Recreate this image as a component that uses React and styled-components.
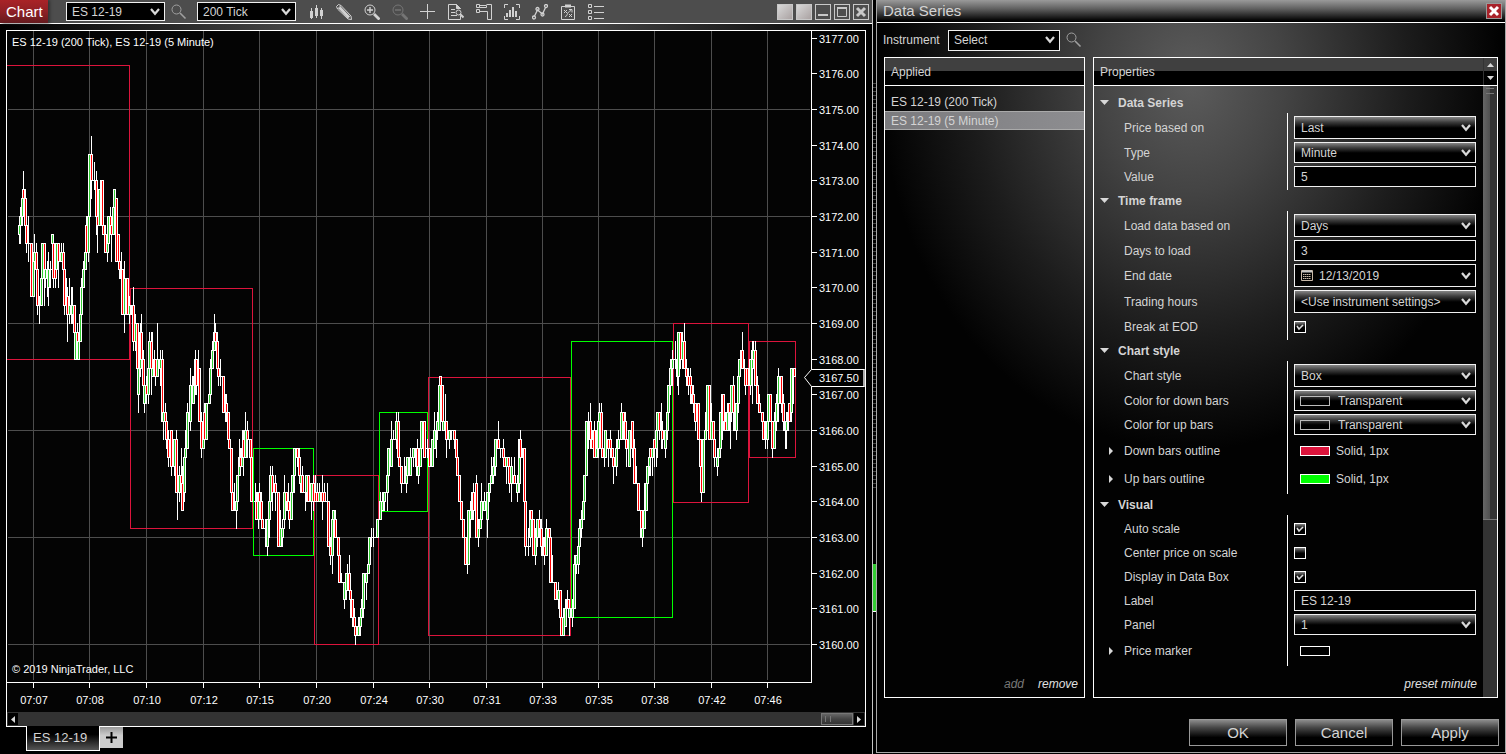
import React, { useState } from 'react';
import styled, { createGlobalStyle, css } from 'styled-components';

const GlobalStyle = createGlobalStyle`
    * { box-sizing: border-box; }
    body {
        margin: 0;
        background: #000;
        color: #d4d4d4;
        font: 12px/16px "Liberation Sans", Arial, sans-serif;
    }
    button, input, select { font: inherit; color: inherit; margin: 0; border-radius: 0; }
`;

const glossy = css`background: linear-gradient(#858585, #3c3c3c 25%, #000 52%);`;

const Desktop = styled.main`
    display: grid;
    grid-template-columns: minmax(0, 1fr) 3px 630px;
    min-height: 100vh;
`;

/* ---------- chart window ---------- */

const ChartWindow = styled.section`
    display: flex;
    flex-direction: column;
    border-right: 1px solid #c4c4c4;
    background: radial-gradient(ellipse 50% 400px at 50% 0, #505050, #444 35%, #000);
`;

const Toolbar = styled.header`
    display: flex;
    align-items: center;
    height: 24px;
    padding-right: 3px;
    background: #4d4d4d;
    border-bottom: 1px solid #fff;
`;

const ChartTitle = styled.h1`
    margin: 0 18px 0 0;
    width: 48px;
    padding-left: 6px;
    font-size: 15px;
    font-weight: normal;
    line-height: 23px;
    color: #fff;
    background: linear-gradient(#a92327, #8f2025 50%, #651a1e);
    box-shadow: 2px 0 3px #333;
`;

const Tools = styled.div`
    display: flex;
    flex: 1;
    gap: 12px;
    margin-left: 12px;
`;

const IconButton = styled.button`
    display: block;
    padding: 0;
    width: 16px;
    height: 16px;
    border: 0;
    background: none;
    color: #d2d2d2;
    opacity: ${p => (p.disabled ? 0.3 : 1)};
    svg { display: block; }
`;

const SearchButton = styled(IconButton)`
    margin: 0 10px 0 6px;
    color: #a0a0a0;
`;

const WindowButtons = styled.div`
    display: flex;
    gap: 3px;
`;

const WindowButton = styled.button`
    display: block;
    padding: 0;
    width: 16px;
    height: 16px;
    border: 1px solid #c8c8c8;
    color: #c8c8c8;
    background: ${p => (p.$solid ? 'linear-gradient(135deg, #d8d8d8, #aaa2a2)' : 'none')};
    svg { display: block; }
`;

const ChartFrame = styled.div`
    margin: 6px 6px 0;
    border: 1px solid #fff;
    background: #040404;
`;

const ChartSvg = styled.svg`
    display: block;
    width: 100%;
    height: auto;
    text { font-size: 11px; fill: #fff; }
`;

const TimeScroll = styled.div`
    display: flex;
    height: 14px;
    padding: 1px;
    background: #333;
`;

const ScrollArrow = styled.button`
    display: block;
    width: 10px;
    padding: 0;
    border: 0;
    background: #000;
    svg { display: block; margin: auto; }
`;

const ScrollThumb = styled.div`
    width: 32px;
    margin: 0 1px 0 auto;
    padding: 2px 3px;
    border: 1px solid #777;
    background: linear-gradient(#666, #444 50%, #333);
    &::before {
        content: '';
        display: block;
        width: 4px;
        height: 6px;
        border: solid #777;
        border-width: 0 1px;
    }
`;

const Tabs = styled.nav`
    display: flex;
    align-items: flex-start;
    padding-left: 26px;
`;

const Tab = styled.button`
    width: 74px;
    height: 25px;
    margin-top: -1px;
    padding: 0 6px;
    border: 1px solid #fff;
    border-top: 0;
    font-size: 13px;
    text-align: left;
    color: #d4d4d4;
    background: linear-gradient(#000 35%, #555);
`;

const AddTab = styled.button`
    display: block;
    width: 23px;
    height: 21px;
    padding: 0 0 0 6px;
    border: 0;
    background: linear-gradient(#999, #ccc 40%);
    svg { display: block; }
`;

/* slice of the window that lies behind the two others */
const Backdrop = styled.div`
    display: flex;
    flex-direction: column;
    padding-top: 80px;
`;

const Ladder = styled.div`
    height: 410px;
    background: repeating-linear-gradient(#000 0 3px, #444 3px 4px);
`;

const LadderFill = styled.div`
    height: 48px;
    margin-top: 74px;
    background: #3c3;
    border-bottom: 1px solid #fff;
`;

/* ---------- dialog ---------- */

const Dialog = styled.section`
    display: flex;
    flex-direction: column;
    margin-bottom: 1px;
    border: solid #a8a8a8;
    border-width: 0 1px 1px;
    background: radial-gradient(ellipse 310px 370px at 50% 80px, #5c5c5c, #444 30%, #1c1c1c 70%, #020202);
`;

const DialogTitle = styled.header`
    display: flex;
    align-items: center;
    justify-content: space-between;
    height: 23px;
    padding: 0 3px 0 6px;
    border-bottom: 1px solid #fff;
    background: linear-gradient(#9a9a9a, #606060 40%, #000 95%);
    h2 { margin: 0; font-size: 15px; font-weight: normal; line-height: 20px; }
`;

const CloseDialog = styled.button`
    display: block;
    padding: 0;
    width: 16px;
    height: 16px;
    border: 1px solid #999;
    background: #a8222a;
    svg { display: block; }
`;

const InstrumentBar = styled.div`
    display: flex;
    align-items: center;
    height: 34px;
    padding-left: 6px;
    label { width: 65px; }
`;

const Panels = styled.div`
    display: grid;
    grid-template-columns: 201px minmax(0, 1fr);
    flex: 1;
    gap: 8px;
    padding: 0 7px;
`;

const Panel = styled.div`
    display: flex;
    flex-direction: column;
    border: 1px solid #fff;
`;

const PanelHead = styled.div`
    display: flex;
    justify-content: space-between;
    height: 28px;
    border-bottom: 1px solid #fff;
    background: linear-gradient(#404040 50%, #000 50%);
    h3 { margin: 0; padding: 0 6px; font-size: 12px; font-weight: normal; line-height: 28px; }
`;

const SeriesList = styled.ul`
    flex: 1;
    margin: 0;
    padding: 6px 0 0;
    list-style: none;
`;

const SeriesItem = styled.li`
    height: 19px;
    padding: 0 6px;
    line-height: 21px;
    ${p => p.$selected && css`
        border: solid #aaa;
        border-width: 1px 0;
        line-height: 19px;
        background: linear-gradient(90deg, #7b7b7e, #8d8d90);
    `}
`;

const PanelLinks = styled.div`
    display: flex;
    justify-content: flex-end;
    gap: 14px;
    padding: 5px 6px;
`;

const PanelLink = styled.a`
    color: ${p => (p.$off ? '#777' : '#e0e0e0')};
    font-style: italic;
    text-decoration: none;
`;

const PropertyArea = styled.div`
    display: grid;
    grid-template-columns: minmax(0, 1fr) 14px;
    flex: 1;
`;

const PropertyList = styled.div`
    display: flex;
    flex-direction: column;
    padding-top: 6px;
    ${PanelLinks} { margin-top: auto; }
`;

const GroupTitle = styled.h4`
    display: flex;
    align-items: center;
    gap: 9px;
    height: 21px;
    margin: 0;
    padding-left: 6px;
    font-size: 12px;
`;

const Group = styled.div`
    display: grid;
    grid-template-columns: 193px minmax(0, 1fr);
    padding-right: 7px;
`;

const Labels = styled.div`
    display: grid;
    gap: 3px;
    padding: 3px 0;
`;

const Values = styled(Labels)`
    padding-left: 6px;
    border-left: 1px solid #fff;
`;

const Cell = styled.div`
    display: flex;
    align-items: center;
    gap: 6px;
    height: ${p => p.$h}px;
`;

const LabelCell = styled(Cell)`
    gap: 11px;
    padding-left: ${p => (p.$expand ? 14 : 30)}px;
`;

const ValueCell = styled(Cell)`
    padding-left: ${p => (p.$inset ? 6 : 0)}px;
`;

const Swatch = styled.span`
    width: 30px;
    height: 10px;
    border: 1px solid ${p => (p.$dim ? '#bbb' : '#fff')};
    background: ${p => p.$color || '#000'};
`;

/* a field and the marks drawn over it share one grid cell */
const FieldBox = styled.span`
    display: grid;
    align-items: center;
    width: ${p => (p.$width ? `${p.$width}px` : '100%')};
    height: ${p => p.$h}px;
    > * { grid-area: 1 / 1; pointer-events: none; }
    > select, > input { pointer-events: auto; }
    > ${Swatch} { margin-left: 6px; }
`;

const field = css`
    appearance: none;
    width: 100%;
    height: 100%;
    padding: 0 20px 0 ${p => p.$pad || 6}px;
    border: 1px solid #f0f0f0;
    outline: 0;
    background: #000;
    ${p => p.$glossy && glossy}
`;

const SelectField = styled.select`${field}`;
const TextField = styled.input`${field}`;

const ChevronMark = styled.svg`
    display: block;
    justify-self: end;
    margin-right: 5px;
`;

const CalendarMark = styled.svg`
    margin-left: 7px;
`;

const CheckBox = styled.input`
    appearance: none;
    width: 12px;
    height: 12px;
    border: 1px solid #fff;
    ${glossy}
`;

const PropertyScroll = styled.div`
    background: #333;
`;

const PropertyThumb = styled.div`
    height: 434px;
    padding: 2px 3px;
    border-bottom: 1px solid #777;
    background: linear-gradient(90deg, #666, #505050 50%, #333 50%);
    &::before {
        content: '';
        display: block;
        height: 4px;
        border: solid #777;
        border-width: 1px 0;
    }
`;

const Spinner = styled.div`
    display: grid;
    width: 14px;
    border-left: 1px solid #333;
    button { display: block; padding: 0; border: 0; background: none; }
    svg { display: block; margin: auto; }
`;

const DialogButtons = styled.footer`
    display: flex;
    justify-content: flex-end;
    gap: 8px;
    padding: 21px 6px 6px;
`;

const DialogButton = styled.button`
    width: 98px;
    height: 27px;
    padding: 0;
    border: 1px solid #999;
    font-size: 15px;
    background: linear-gradient(#8c8c8c, #484848 30%, #000 70%);
`;

/* ---------- icons ---------- */

const Glyph = ({ children, w = 1 }) => (
    <svg width="16" height="16" viewBox="0 0 16 16" fill="none" stroke="currentColor" strokeWidth={w}>
        {children}
    </svg>
);

const Chevron = () => (
    <ChevronMark width="10" height="8" viewBox="0 0 10 8">
        <path d="M1 1l4 4.8L9 1" fill="none" stroke="#d8d8d8" strokeWidth="2.2" />
    </ChevronMark>
);

const Search = () => (
    <Glyph><circle cx="5.5" cy="5.5" r="4.5" /><path d="M9 9l5.5 5.5" strokeWidth="1.6" /></Glyph>
);

const Triangle = ({ d, w = 9, h = 5 }) => (
    <svg width={w} height={h} viewBox={`0 0 ${w} ${h}`} aria-hidden="true"><path d={d} fill="#d8d8d8" /></svg>
);

const Cross = ({ color }) => (
    <svg width="14" height="14" viewBox="0 0 14 14"><path d="M3 3l8 8M11 3l-8 8" stroke={color} strokeWidth="3" /></svg>
);

const tools = [
    ['Bars', <Glyph key="i"><path d="M3.5 4v11M8.500 1v13M13.500 4v11" /><path d="M3.500 7v7M8.500 4v8M13.500 6v6" strokeWidth="3" /></Glyph>],
    ['Draw', <Glyph key="i"><path d="M.5 2.500l2-2 2.500 1 10 10.500.5 3.500-3.500-.5L1.500 5z" /><path d="M3.500 3.500l9.500 10" strokeWidth="3" /><path d="M1.500 5L5 1.500" /></Glyph>],
    ['Zoom in', <Glyph key="i"><circle cx="6" cy="6" r="5" /><path d="M3 6h6M6 3v6" strokeWidth="1.4" /><path d="M10 10l5.500 5.500" strokeWidth="2.800" /></Glyph>],
    ['Zoom out', <Glyph key="i"><circle cx="6" cy="6" r="5" /><path d="M3 6h6" strokeWidth="1.4" /><path d="M10 10l5.500 5.500" strokeWidth="2.800" /></Glyph>],
    ['Crosshair', <Glyph key="i"><path d="M0 7.500h15M7.500 0v15" /></Glyph>],
    ['Data box', <Glyph key="i"><path d="M12.500 12v3.500h-12V.5h8l4 4" /><path d="M8.500.5v4h4z" fill="currentColor" /><path d="M3 5.500h4M3 8.500h4M3 11.500h6" /><circle cx="10.500" cy="8.500" r="2.500" /><path d="M12 10l3.500 3.500" strokeWidth="2" /></Glyph>],
    ['Chart trader', <Glyph key="i"><path d="M.5.500h3v3h-3zM.5 5.500h3v3h-3zM10.500.5h5v15h-4v-8h-8M3.500 1.500h7v2h-7" /></Glyph>],
    ['Indicators', <Glyph key="i"><path d="M4 .5H.5V4M12 .5h3.500V4M.5 12v3.500H4M15.500 12v3.500H12" /><path d="M3 13V9M6 13V6M9 13V3M12 13V7" strokeWidth="2" /></Glyph>],
    ['Strategies', <Glyph key="i" w={1.3}><path d="M2.500 12l3-6 5 4 3-6.500" /><circle cx="2" cy="13.500" r="1.500" /><circle cx="5.500" cy="5" r="1.500" /><circle cx="10.500" cy="10.500" r="1.500" /><circle cx="14" cy="2" r="1.500" /></Glyph>],
    ['Performance', <Glyph key="i"><path d="M1.500 2.500h13v13h-13z" /><path d="M5 2h6" strokeWidth="3" /><path d="M4 6l3 3M7 6L4 9M9 10l3 3M12 10l-3 3M5 12.500c3 0 1-4 6-6M9 5.500h3v3" /></Glyph>],
    ['Properties', <Glyph key="i"><path d="M.5.500h3v3h-3zM.5 6.500h3v3h-3zM.5 12.500h3v3h-3zM6 2.500h10M6 8.500h10M6 14.500h10" /></Glyph>],
];

/* ---------- chart ---------- */

// x, open, close, high, low; prices in ticks above 3160.00
const bars = `
19,46,47,48,45 20,47,48,49,45 22,48,50,51,47 23,51,50,53,48 25,50,47,51,46 26,47,45,48,44 28,45,45,48,43
31,45,39,45,39 33,39,43,43,39 34,43,44,46,43 36,44,42,45,38 37,42,38,42,37 39,38,38,39,36 41,38,41,42,38 42,41,45,45,39
44,45,42,45,38 45,41,42,42,40 47,42,41,43,39 48,40,42,44,38 50,42,42,43,40 52,45,46,46,42 53,45,41,46,40 55,45,41,45,40 56,42,45,45,41
58,45,43,45,40 61,43,44,45,43 63,44,42,45,41 64,42,38,42,37 66,39,39,41,37 67,39,37,40,34 69,37,38,41,36 71,38,37,40,36 72,37,38,40,36
74,38,35,38,32 75,32,35,35,32 77,35,34,36,32 78,32,34,34,32 80,34,37,37,34 81,37,40,41,36 83,40,42,43,40 85,42,44,47,42 86,47,44,48,42
88,44,48,48,43 89,48,55,55,47 91,55,52,57,50 94,52,52,54,51 96,52,48,53,46 97,48,47,50,44 99,47,51,51,47 101,51,52,52,47 102,52,47,52,47
103,47,46,48,46 105,46,44,47,44 107,44,46,47,43 108,45,48,48,44 110,48,47,49,46 111,47,46,48,43 113,46,49,50,46 114,49,51,51,46 116,50,43,50,43
118,46,43,46,42 119,43,42,46,41 121,42,41,44,40 122,42,37,42,37 124,37,41,43,35 127,41,37,41,37 129,37,38,39,36 131,38,38,38,37 133,38,34,40,33
135,34,36,37,33 137,36,31,36,28 138,28,31,32,26 140,31,35,36,30 141,35,32,37,31 143,32,29,33,28 144,27,29,30,26 146,29,28,30,27 148,28,31,31,27
149,31,34,35,30 151,34,31,35,28 152,30,31,35,30 154,32,31,33,30 155,32,30,32,29 157,30,32,36,30 160,31,32,33,29 162,32,25,33,25 163,25,26,28,23
165,26,25,27,23 166,25,23,25,22 168,23,21,24,20 171,24,20,24,19 172,20,20,22,20 174,20,23,23,19 176,23,17,24,17 177,17,17,18,14 179,17,19,20,16
181,19,18,22,17 182,18,15,20,15 184,17,21,22,16 185,21,22,24,20 187,22,26,27,22 190,25,29,31,24 192,29,29,30,27 193,27,29,30,27 195,29,32,33,28
196,32,29,32,28 198,31,31,33,25 199,31,25,31,25 201,25,22,26,21 203,22,23,26,22 204,26,23,27,22 206,23,27,27,23 209,27,28,29,27 210,28,31,32,27
212,31,33,34,31 214,33,35,37,33 215,35,34,36,33 217,34,31,35,31 218,31,30,32,29 220,30,30,32,29 223,30,26,30,26 225,26,26,28,25 226,27,26,28,25
228,26,23,26,23 229,23,22,24,22 231,22,17,22,17 232,17,15,17,15 234,15,15,18,15 236,15,16,17,13 237,16,19,19,15 239,19,21,23,19 240,21,20,22,19
242,20,22,24,20 243,23,21,24,19 245,21,24,26,21 247,24,23,25,21 250,23,21,23,20 251,21,16,22,16
255,16,16,18,14 256,16,14,17,14 258,14,17,17,13 259,17,16,18,15 261,16,14,17,13 262,14,13,15,13 265,13,13,14,11 267,11,14,14,10 269,14,16,17,12
270,16,19,20,15 272,19,17,20,15 275,18,17,19,15 278,17,11,17,11 280,11,13,15,11 282,12,13,14,11 284,14,17,19,13 286,17,16,17,15 288,16,15,18,14
289,15,14,16,13 291,14,17,19,14 292,17,19,19,16 294,19,22,22,17 297,22,21,22,20 299,21,19,22,18 300,18,19,20,17 302,19,17,20,17 305,17,17,19,15
306,17,19,19,16 308,19,16,19,16 311,16,18,18,14 313,18,16,19,15 315,17,16,19,16 317,17,16,18,16 319,16,17,18,16 322,17,16,19,14 324,17,16,18,16
327,16,16,18,15 328,16,11,16,11 330,11,10,12,9 332,10,14,14,8 333,14,15,15,12 335,14,12,15,12 338,12,10,12,10 339,10,7,12,7 341,7,7,8,7
344,5,7,7,4 346,6,8,8,5 347,8,8,9,6 349,8,6,10,6 350,6,5,7,3 352,5,3,5,2 354,3,2,4,1 355,2,1,2,0 358,1,2,3,1 360,2,3,4,1 361,3,4,5,3
363,4,8,8,3 366,7,8,8,5 368,8,9,11,8 369,9,12,12,8 371,12,12,13,11 373,12,12,13,11 376,12,12,12,12 377,12,14,14,12 380,14,16,17,14
382,15,16,17,15 384,16,17,17,15 387,17,19,19,15 388,19,22,22,18 391,20,23,25,20 393,23,23,24,23 396,23,25,26,22 398,25,21,26,21 399,21,20,21,20
401,20,18,20,17 404,18,18,21,18 406,18,20,20,17 407,19,21,21,18 410,19,21,22,19 413,21,22,22,20 415,21,21,22,20 417,22,19,23,19 418,19,20,21,18
420,20,22,22,20 421,22,25,25,21 424,25,21,25,21 427,22,22,23,21 429,22,20,22,20 432,20,23,23,20 434,22,24,26,22 436,24,24,24,21 437,24,25,26,23
439,24,29,30,24 440,30,29,30,24 442,29,25,29,24 443,24,25,26,24 445,25,24,28,23 446,25,23,25,21 449,23,24,24,22 451,24,24,24,23 454,24,23,24,22
456,23,21,23,21 457,21,19,21,19 459,19,16,19,16 461,16,14,16,14 463,14,12,14,12 465,12,9,12,9 467,9,9,15,8 468,9,15,15,9 470,14,15,16,12
472,15,17,17,14 473,17,15,18,14 476,18,12,19,12 478,12,13,14,11 480,13,14,16,13 481,14,16,18,13 484,15,16,17,15 487,14,17,17,12 489,17,18,18,16
491,18,19,21,18 493,19,20,21,18 495,20,23,23,19 498,23,22,25,22 500,22,22,22,21 503,22,21,23,20 504,21,20,22,20 506,20,21,21,18 508,21,20,21,18
509,20,18,20,17 511,18,20,21,16 514,19,18,21,18 517,17,18,19,16 519,18,23,23,17 520,23,21,24,21 523,21,22,22,21 524,22,16,22,16 525,16,11,16,10
528,11,11,13,10 530,12,15,15,11 531,15,14,15,12 533,14,10,14,10 535,10,12,13,9 537,12,14,14,11 539,14,13,15,12 541,13,11,14,10 543,10,11,12,10
544,11,10,12,9 546,10,13,14,10 549,13,12,13,11 550,12,7,13,7 552,7,7,10,7 555,7,5,7,5 558,5,6,7,4 560,6,3,6,3 561,3,1,3,1 563,1,3,4,1
565,2,4,5,2 567,4,5,6,4 568,5,4,5,3 569,3,4,5,1 572,3,4,5,2 574,4,9,10,4 576,9,10,10,8 578,9,11,11,8 579,11,13,14,9 581,13,14,15,12
583,14,16,16,14 584,16,19,19,16 586,19,25,25,19 588,25,25,26,22 590,25,23,27,22 592,23,22,24,22 594,24,21,25,21 596,21,22,24,21 598,22,25,25,21
599,25,26,27,23 601,26,22,27,22 602,22,21,26,21 604,21,21,24,20 605,21,24,24,21 608,23,22,23,20 610,23,22,24,21 612,22,21,22,20 613,21,20,21,18
616,20,22,23,19 618,22,23,24,22 621,23,26,27,23 623,26,25,26,23 625,25,23,26,22 626,23,22,24,20 629,20,24,24,20 632,25,22,25,21 634,22,18,23,18
636,18,18,20,18 638,18,15,18,15 641,15,12,15,12 642,12,13,15,11 644,13,15,18,14 646,15,18,20,15 647,18,20,20,18 649,20,21,22,19 650,22,21,22,19
652,21,22,22,19 654,23,22,23,20 656,22,24,24,20 657,24,26,26,21 659,26,24,26,23 661,24,24,27,22 662,24,23,25,22 665,22,24,24,21 667,24,26,26,23
668,26,29,29,25 670,29,31,32,28 672,31,32,33,29 675,32,32,34,31 677,32,30,33,29 678,30,35,35,28 680,35,32,35,31 682,32,34,35,31 684,34,31,36,31
686,31,30,32,29 688,30,29,31,28 690,30,29,31,27 691,29,28,30,27 693,28,27,29,26 695,27,25,27,24 698,27,23,27,23 700,23,20,23,20 701,20,17,20,16
703,17,23,23,17 705,23,24,26,23 707,24,29,29,24 709,29,23,29,23 711,23,25,27,23 713,25,23,25,21 714,23,21,23,20 717,20,21,22,19 719,21,22,22,21
720,22,26,26,21 722,26,28,28,23 723,28,25,28,24 725,25,24,26,24 727,24,26,27,24 729,27,26,27,24 730,26,26,27,22 731,26,29,29,25 733,29,26,30,24
735,26,24,26,24 736,24,27,27,23 738,27,30,30,26 739,30,32,32,29 741,32,33,33,31 742,33,31,35,31 744,31,31,32,29 745,31,29,31,28 747,31,29,31,29
750,29,32,32,28 752,31,33,34,27 753,32,33,34,31 755,33,29,34,29 757,29,27,30,27 759,27,26,28,26 762,26,25,26,24 763,25,23,26,23 765,23,23,25,22
767,23,25,25,22 768,25,28,28,23 770,28,25,28,25 772,25,22,25,21 774,22,25,26,22 776,25,27,28,24 778,27,30,31,25 781,30,27,30,26 783,27,25,28,24
785,25,24,25,22 786,24,25,26,22 788,25,26,27,24 789,27,25,27,25 791,26,31,31,25 793,30,31,31,27 794,31,30,31,30
`.trim().split(/\s+/).map(bar => bar.split(',').map(Number));

const RED = '#dc143c';
const GREEN = '#0f0';

// five-minute boxes: left, top, right, bottom, outline
const boxes = [
    [4, 65, 129, 359, RED],
    [130, 288, 252, 528, RED],
    [253, 448, 313, 555, GREEN],
    [314, 475, 378, 644, RED],
    [379, 412, 427, 511, GREEN],
    [428, 377, 570, 635, RED],
    [571, 341, 672, 617, GREEN],
    [673, 323, 748, 502, RED],
    [749, 341, 795, 457, RED],
];

const times = [
    [33, '07:07'], [89, '07:08'], [146, '07:10'], [203, '07:12'], [259, '07:15'], [316, '07:20'], [373, '07:24'],
    [429, '07:30'], [486, '07:31'], [542, '07:33'], [598, '07:35'], [654, '07:38'], [711, '07:42'], [767, '07:46'],
];

const prices = Array.from({ length: 18 }, (_, i) => 3160 + i);
const tickY = tick => Math.round(644 - tick * 8.917);

const Candle = ({ bar: [x, open, close, high, low] }) => {
    const top = tickY(Math.max(open, close));
    const height = tickY(Math.min(open, close)) - top + 1;
    return (
        <g>
            <rect x={x} y={tickY(high)} width="1" height={tickY(low) - tickY(high) + 1} fill="#fff" />
            <rect x={x - 1} y={top} width="3" height={height} fill="#fff" />
            {height > 2 && (
                <rect x={x} y={top + 1} width="1" height={height - 2} fill={close > open ? '#32cd32' : '#f00'} />
            )}
        </g>
    );
};

const Chart = () => (
    <ChartSvg viewBox="7 31 858 681" shapeRendering="crispEdges" role="img" aria-label="ES 12-19 price chart">
        {times.map(([x]) => <rect key={x} x={x} y="31" width="1" height="649" fill="#4d4d4d" />)}
        {[0, 12, 24, 36, 48, 60].map(t => <rect key={t} x="8" y={tickY(t)} width="802" height="1" fill="#4d4d4d" />)}
        {boxes.map(([l, t, r, b, color]) => (
            <rect key={l} x={l + 0.5} y={t + 0.5} width={r - l} height={b - t} fill="none" stroke={color} />
        ))}
        {bars.map(bar => <Candle key={bar[0]} bar={bar} />)}
        <path d="M7 682.500h805M811.500 31v652" stroke="#fff" />
        {times.map(([x, label]) => (
            <g key={x}>
                <rect x={x} y="683" width="1" height="5" fill="#fff" />
                <text x={x + 1} y="704" textAnchor="middle">{label}</text>
            </g>
        ))}
        {prices.map(price => {
            const y = tickY((price - 3160) * 4);
            return (
                <g key={price}>
                    <rect x="812" y={y} width="5" height="1" fill="#fff" />
                    <text x="819" y={y + 5}>{price.toFixed(2)}</text>
                </g>
            );
        })}
        <path d="M804.500 377.500l7-8h53v17h-53z" fill="#000" stroke="#fff" shapeRendering="auto" />
        <rect x="863" y="370" width="2" height="16" fill="#aaa" />
        <text x="819" y="382">3167.50</text>
        <text x="12" y="46">ES 12-19 (200 Tick), ES 12-19 (5 Minute)</text>
        <text x="12" y="673">© 2019 NinjaTrader, LLC</text>
    </ChartSvg>
);

/* ---------- property rows ---------- */

const groups = [
    {
        title: 'Data Series',
        rows: [
            { label: 'Price based on', type: 'select', value: 'Last', h: 23 },
            { label: 'Type', type: 'select', value: 'Minute' },
            { label: 'Value', type: 'text', value: '5' },
        ],
    },
    {
        title: 'Time frame',
        rows: [
            { label: 'Load data based on', type: 'select', value: 'Days', h: 23 },
            { label: 'Days to load', type: 'text', value: '3' },
            { label: 'End date', type: 'date', value: '12/13/2019', h: 23 },
            { label: 'Trading hours', type: 'select', value: '<Use instrument settings>', h: 23 },
            { label: 'Break at EOD', type: 'check', value: true },
        ],
    },
    {
        title: 'Chart style',
        rows: [
            { label: 'Chart style', type: 'select', value: 'Box', h: 23 },
            { label: 'Color for down bars', type: 'color', value: 'Transparent' },
            { label: 'Color for up bars', type: 'color', value: 'Transparent' },
            { label: 'Down bars outline', type: 'stroke', value: 'Solid, 1px', color: RED, h: 25 },
            { label: 'Up bars outline', type: 'stroke', value: 'Solid, 1px', color: GREEN, h: 25 },
        ],
    },
    {
        title: 'Visual',
        rows: [
            { label: 'Auto scale', type: 'check', value: true },
            { label: 'Center price on scale', type: 'check', value: false },
            { label: 'Display in Data Box', type: 'check', value: true },
            { label: 'Label', type: 'text', value: 'ES 12-19' },
            { label: 'Panel', type: 'select', value: '1' },
            { label: 'Price marker', type: 'stroke', value: '', h: 25 },
        ],
    },
];

const toId = label => label.toLowerCase().replace(/ /g, '-');

const Check = ({ id, initial }) => {
    const [checked, setChecked] = useState(initial);
    return (
        <FieldBox $width={12} $h={12}>
            <CheckBox id={id} type="checkbox" checked={checked} onChange={e => setChecked(e.target.checked)} />
            {checked && (
                <svg width="12" height="12" viewBox="0 0 12 12">
                    <path d="M3 5l2 3 4-4" fill="none" stroke="#e0e0e0" strokeWidth="1.5" />
                </svg>
            )}
        </FieldBox>
    );
};

const Control = ({ row: { label, type, value, color, h = 21 } }) => {
    const id = `${toId(label)}-field`;
    if (type === 'check') return <Check id={id} initial={value} />;
    if (type === 'stroke') return <><Swatch $color={color} />{value}</>;
    if (type === 'text') {
        return <FieldBox $h={h}><TextField id={id} defaultValue={value} /></FieldBox>;
    }
    if (type === 'date') {
        return (
            <FieldBox $h={h}>
                <TextField id={id} defaultValue={value} $pad={24} />
                <CalendarMark width="12" height="11" viewBox="0 0 12 11">
                    <path d="M.5.5h11v10H.5z" fill="none" stroke="#c8b8a8" />
                    <path d="M2 4.500h8M2 6.500h8M2 8.500h8" stroke="#c8b8a8" strokeDasharray="1.500 .5" />
                    <path d="M1 1.500h10" stroke="#c8c8c8" strokeWidth="2" />
                </CalendarMark>
                <Chevron />
            </FieldBox>
        );
    }
    return (
        <FieldBox $h={h}>
            <SelectField id={id} $glossy $pad={type === 'color' ? 43 : 6}><option>{value}</option></SelectField>
            {type === 'color' && <Swatch $dim $color="transparent" />}
            <Chevron />
        </FieldBox>
    );
};

const PropertyGroup = ({ title, rows }) => (
    <>
        <GroupTitle><Triangle d="M0 0h9L4.500 5z" />{title}</GroupTitle>
        <Group>
            <Labels>
                {rows.map(row => (
                    <LabelCell key={row.label} $h={row.h || 21} $expand={row.type === 'stroke'}>
                        {row.type === 'stroke'
                            ? <><Triangle d="M1 0v8l4-4z" w={5} h={8} />{row.label}</>
                            : <label htmlFor={`${toId(row.label)}-field`}>{row.label}</label>}
                    </LabelCell>
                ))}
            </Labels>
            <Values>
                {rows.map(row => (
                    <ValueCell key={row.label} $h={row.h || 21} $inset={row.type === 'stroke'}>
                        <Control row={row} />
                    </ValueCell>
                ))}
            </Values>
        </Group>
    </>
);

const Picker = ({ label, id, value, width, h }) => (
    <FieldBox $width={width} $h={h}>
        <SelectField id={id} aria-label={label} $pad={5}><option>{value}</option></SelectField>
        <Chevron />
    </FieldBox>
);

const DataSeriesDialog = () => (
    <Dialog role="dialog" aria-label="Data Series">
        <DialogTitle>
            <h2>Data Series</h2>
            <CloseDialog aria-label="Close dialog"><Cross color="#fff" /></CloseDialog>
        </DialogTitle>
        <InstrumentBar>
            <label htmlFor="instrument">Instrument</label>
            <Picker id="instrument" value="Select" width={112} h={21} />
            <SearchButton aria-label="Find instrument"><Search /></SearchButton>
        </InstrumentBar>
        <Panels>
            <Panel>
                <PanelHead><h3>Applied</h3></PanelHead>
                <SeriesList>
                    <SeriesItem>ES 12-19 (200 Tick)</SeriesItem>
                    <SeriesItem $selected>ES 12-19 (5 Minute)</SeriesItem>
                </SeriesList>
                <PanelLinks>
                    <PanelLink href="#add" $off>add</PanelLink>
                    <PanelLink href="#remove">remove</PanelLink>
                </PanelLinks>
            </Panel>
            <Panel>
                <PanelHead>
                    <h3>Properties</h3>
                    <Spinner>
                        <button aria-label="Scroll up"><Triangle d="M0 4l3.500-4L7 4z" w={7} h={4} /></button>
                        <button aria-label="Scroll down"><Triangle d="M0 0h7L3.500 4z" w={7} h={4} /></button>
                    </Spinner>
                </PanelHead>
                <PropertyArea>
                    <PropertyList>
                        {groups.map(group => <PropertyGroup key={group.title} {...group} />)}
                        <PanelLinks><PanelLink href="#preset">preset minute</PanelLink></PanelLinks>
                    </PropertyList>
                    <PropertyScroll><PropertyThumb /></PropertyScroll>
                </PropertyArea>
            </Panel>
        </Panels>
        <DialogButtons>
            <DialogButton>OK</DialogButton>
            <DialogButton>Cancel</DialogButton>
            <DialogButton>Apply</DialogButton>
        </DialogButtons>
    </Dialog>
);

const App = () => (
    <>
        <GlobalStyle />
        <Desktop>
            <ChartWindow>
                <Toolbar>
                    <ChartTitle>Chart</ChartTitle>
                    <Picker label="Chart instrument" value="ES 12-19" width={99} h={19} />
                    <SearchButton aria-label="Search"><Search /></SearchButton>
                    <Picker label="Interval" value="200 Tick" width={99} h={19} />
                    <Tools>
                        {tools.map(([name, icon]) => (
                            <IconButton key={name} aria-label={name} disabled={name === 'Zoom out'}>{icon}</IconButton>
                        ))}
                    </Tools>
                    <WindowButtons>
                        <WindowButton $solid aria-label="Link instrument" />
                        <WindowButton $solid aria-label="Link interval" />
                        <WindowButton aria-label="Minimize">
                            <svg width="14" height="14"><path d="M2 10h10" stroke="currentColor" strokeWidth="2" /></svg>
                        </WindowButton>
                        <WindowButton aria-label="Maximize">
                            <svg width="14" height="14">
                                <path d="M2.500 3v8.500h9V3" fill="none" stroke="currentColor" />
                                <path d="M2 3h10" stroke="currentColor" strokeWidth="2" />
                            </svg>
                        </WindowButton>
                        <WindowButton aria-label="Close chart"><Cross color="#c8c8c8" /></WindowButton>
                    </WindowButtons>
                </Toolbar>
                <ChartFrame>
                    <Chart />
                    <TimeScroll>
                        <ScrollArrow aria-label="Scroll left"><Triangle d="M4 0v7L0 3.500z" w={4} h={7} /></ScrollArrow>
                        <ScrollThumb />
                        <ScrollArrow aria-label="Scroll right"><Triangle d="M0 0v7l4-3.500z" w={4} h={7} /></ScrollArrow>
                    </TimeScroll>
                </ChartFrame>
                <Tabs>
                    <Tab>ES 12-19</Tab>
                    <AddTab aria-label="New tab">
                        <svg width="11" height="11"><path d="M0 5.500h11M5.500 0v11" stroke="#000" strokeWidth="2" /></svg>
                    </AddTab>
                </Tabs>
            </ChartWindow>
            <Backdrop>
                <Ladder />
                <LadderFill />
            </Backdrop>
            <DataSeriesDialog />
        </Desktop>
    </>
);

export default App;
